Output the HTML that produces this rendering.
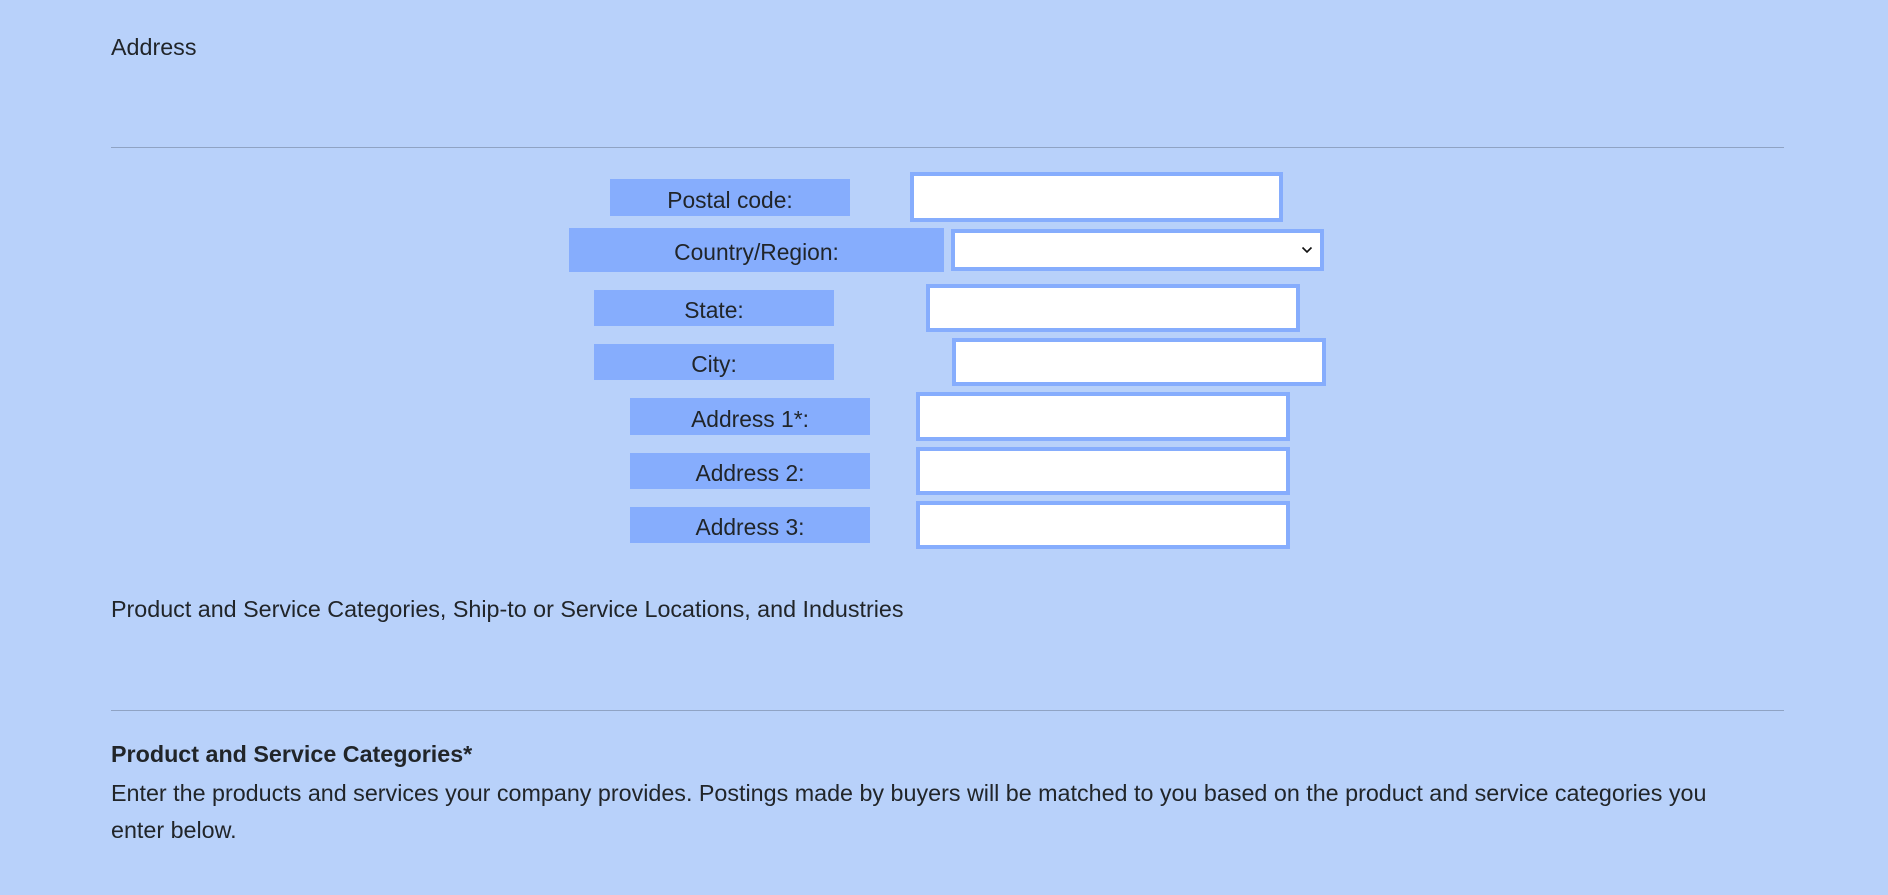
<!DOCTYPE html>
<html><head><meta charset="utf-8"><style>
html,body{margin:0;padding:0}
body{width:1888px;height:895px;background:#b8d1fa;font-family:"Liberation Sans",sans-serif;color:#212529;position:relative;overflow:hidden;font-size:23.3px}
.a{position:absolute}
.t{position:absolute;left:111px;white-space:nowrap}
.hr{position:absolute;left:111px;width:1673px;height:1px;background:#8fa3c4}
.l{position:absolute;background:#86adfd;text-align:center;font-size:22.8px;display:flex;align-items:center;justify-content:center;padding-top:5px;box-sizing:border-box}
.i{position:absolute;background:#fff;border:4px solid #86adfd;box-sizing:border-box}
</style></head><body>
<div class="t" style="top:34px">Address</div>
<div class="hr" style="top:147px"></div>

<div class="l" style="left:610px;top:179px;width:240px;height:37px">Postal code:</div>
<div class="i" style="left:910px;top:172px;width:373px;height:50px"></div>

<div class="l" style="left:569px;top:228px;width:375px;height:44px">Country/Region:</div>
<div class="i" style="left:951px;top:229px;width:373px;height:42px"></div>
<svg class="a" style="left:1301px;top:245px" width="12" height="10" viewBox="0 0 12 10"><path d="M1.5 2.5 L6 7 L10.5 2.5" fill="none" stroke="#111" stroke-width="1.6"/></svg>

<div class="l" style="left:594px;top:290px;width:240px;height:36px">State:</div>
<div class="i" style="left:926px;top:284px;width:374px;height:48px"></div>

<div class="l" style="left:594px;top:344px;width:240px;height:36px">City:</div>
<div class="i" style="left:952px;top:338px;width:374px;height:48px"></div>

<div class="l" style="left:630px;top:398px;width:240px;height:37px">Address 1*:</div>
<div class="i" style="left:916px;top:392px;width:374px;height:49px"></div>

<div class="l" style="left:630px;top:453px;width:240px;height:36px">Address 2:</div>
<div class="i" style="left:916px;top:447px;width:374px;height:48px"></div>

<div class="l" style="left:630px;top:507px;width:240px;height:36px">Address 3:</div>
<div class="i" style="left:916px;top:501px;width:374px;height:48px"></div>

<div class="t" style="top:596px">Product and Service Categories, Ship-to or Service Locations, and Industries</div>
<div class="hr" style="top:710px"></div>
<div class="t" style="top:741px;font-weight:bold">Product and Service Categories*</div>
<div class="t" style="top:775px;line-height:37px;white-space:normal;width:1630px">Enter the products and services your company provides. Postings made by buyers will be matched to you based on the product and service categories you enter below.</div>
</body></html>
